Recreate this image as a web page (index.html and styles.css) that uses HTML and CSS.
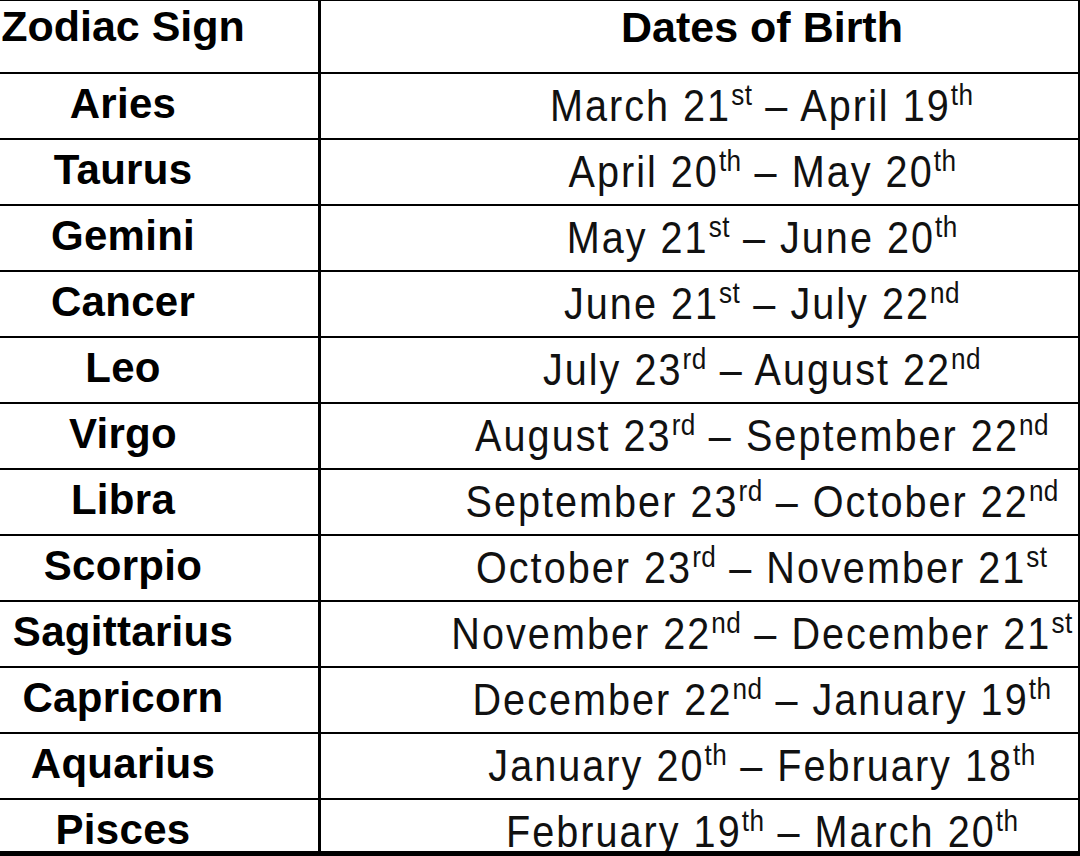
FILE: index.html
```html
<!DOCTYPE html>
<html lang="en">
<head>
<meta charset="utf-8">
<title>Zodiac Signs</title>
<link rel="stylesheet" href="styles.css">
</head>
<body>
<div class="table">
  <div class="cell sign head"><span>Zodiac Sign</span></div>
  <div class="cell dates head"><span>Dates of Birth</span></div>

  <div class="cell sign"><span>Aries</span></div>
  <div class="cell dates"><span class="d">March 21<sup>st</sup> – April 19<sup>th</sup></span></div>

  <div class="cell sign"><span>Taurus</span></div>
  <div class="cell dates"><span class="d">April 20<sup>th</sup> – May 20<sup>th</sup></span></div>

  <div class="cell sign"><span>Gemini</span></div>
  <div class="cell dates"><span class="d">May 21<sup>st</sup> – June 20<sup>th</sup></span></div>

  <div class="cell sign"><span>Cancer</span></div>
  <div class="cell dates"><span class="d">June 21<sup>st</sup> – July 22<sup>nd</sup></span></div>

  <div class="cell sign"><span>Leo</span></div>
  <div class="cell dates"><span class="d">July 23<sup>rd</sup> – August 22<sup>nd</sup></span></div>

  <div class="cell sign"><span>Virgo</span></div>
  <div class="cell dates"><span class="d">August 23<sup>rd</sup> – September 22<sup>nd</sup></span></div>

  <div class="cell sign"><span>Libra</span></div>
  <div class="cell dates"><span class="d">September 23<sup>rd</sup> – October 22<sup>nd</sup></span></div>

  <div class="cell sign"><span>Scorpio</span></div>
  <div class="cell dates"><span class="d">October 23<sup>rd</sup> – November 21<sup>st</sup></span></div>

  <div class="cell sign"><span>Sagittarius</span></div>
  <div class="cell dates"><span class="d">November 22<sup>nd</sup> – December 21<sup>st</sup></span></div>

  <div class="cell sign"><span>Capricorn</span></div>
  <div class="cell dates"><span class="d">December 22<sup>nd</sup> – January 19<sup>th</sup></span></div>

  <div class="cell sign"><span>Aquarius</span></div>
  <div class="cell dates"><span class="d">January 20<sup>th</sup> – February 18<sup>th</sup></span></div>

  <div class="cell sign last"><span>Pisces</span></div>
  <div class="cell dates last"><span class="d">February 19<sup>th</sup> – March 20<sup>th</sup></span></div>
</div>
</body>
</html>
```

FILE: styles.css
```css
html, body {
  margin: 0;
  padding: 0;
  background: #fff;
}
body {
  width: 1080px;
  height: 856px;
  overflow: hidden;
  font-family: "Liberation Sans", Arial, sans-serif;
  color: #000;
}
.table {
  display: grid;
  grid-template-columns: 321px 759px;
  grid-template-rows: 73px repeat(11, 66px) 57px;
  border-top: 1px solid #000;
}
.cell {
  box-sizing: border-box;
  display: flex;
  justify-content: center;
  align-items: flex-start;
  white-space: nowrap;
  border-bottom: 2px solid #000;
  overflow: visible;
  line-height: normal;
}
.sign {
  border-right: 3px solid #000;
  padding-right: 72px;
  padding-top: 6px;
  font-weight: bold;
  font-size: 42px;
  letter-spacing: 0.3px;
}
.dates {
  border-right: 2px solid #000;
  padding-left: 125px;
  padding-top: 6px;
  font-size: 45px;
  color: #111;
}
.cell.head {
  font-weight: bold;
  font-size: 43px;
  padding-top: 1px;
  letter-spacing: 0;
  color: #000;
}
.dates.head {
  padding-top: 2px;
}
.cell.last {
  border-bottom: 6px solid #000;
  overflow: hidden;
}
.d {
  display: inline-block;
  transform: scaleX(0.88);
  letter-spacing: 2.3px;
}
sup {
  font-size: 0.66em;
  line-height: 0;
  vertical-align: 16px;
  letter-spacing: 0.5px;
}
```
